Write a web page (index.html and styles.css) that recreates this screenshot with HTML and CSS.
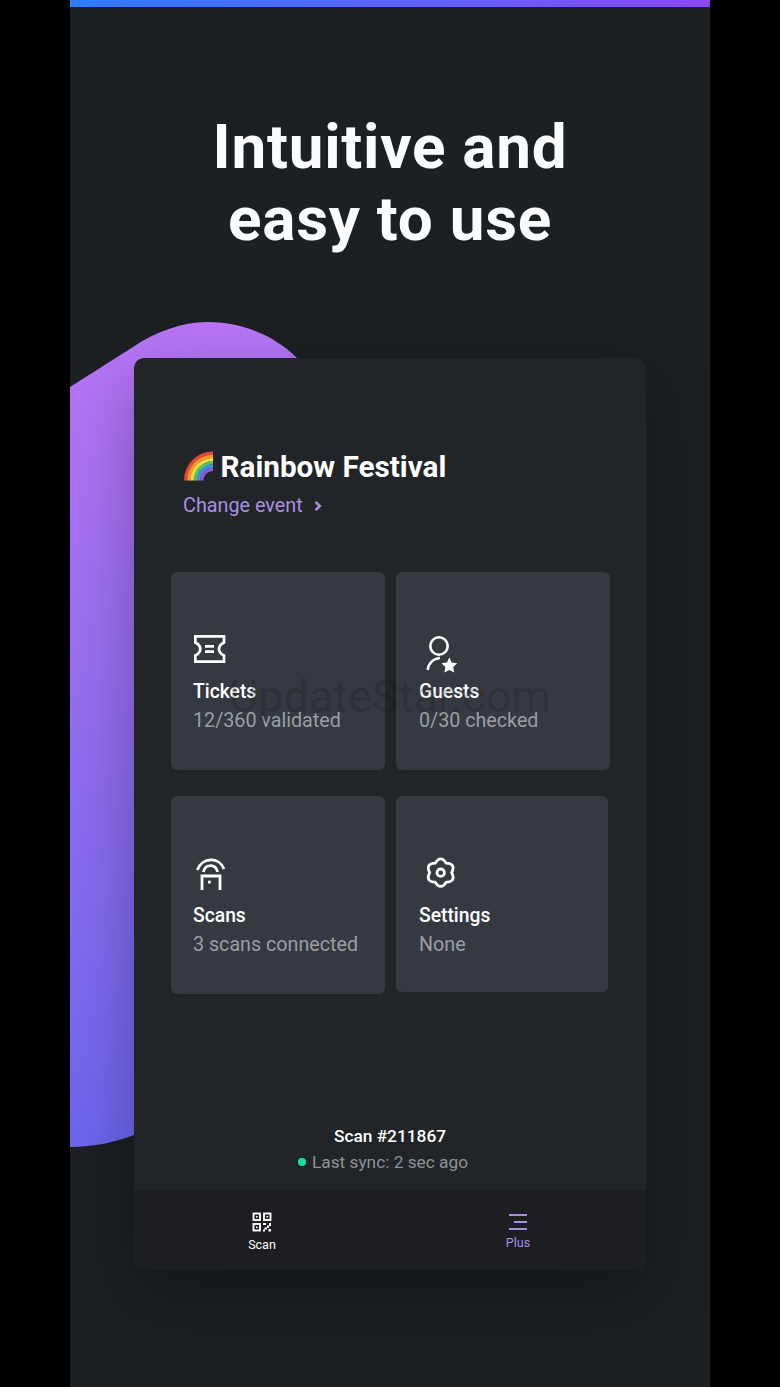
FILE: index.html
```html
<!DOCTYPE html>
<html lang="en">
<head>
<meta charset="utf-8">
<title>Rainbow Festival</title>
<link rel="stylesheet" href="styles.css">
</head>
<body>
<main class="phone">
  <div class="topbar"></div>
  <h1 class="headline">Intuitive and<br>easy to use</h1>

  <svg class="blob" width="240" height="840" viewBox="0 0 240 840" aria-hidden="true">
    <defs>
      <linearGradient id="blobfill" x1="0" y1="0" x2="0" y2="1">
        <stop offset="0" stop-color="#b876f6"/>
        <stop offset="1" stop-color="#6e66ee"/>
      </linearGradient>
    </defs>
    <path fill="url(#blobfill)" d="M0 67 L63 27 C85 12 112 2 137 2 C170 2 203 14 227 38 L232 800 L64 815 C46 822 24 827 0 827 Z"/>
  </svg>

  <section class="card">
    <header class="event">
      <h2 class="event-title">
        <svg class="rainbow" width="30" height="30" viewBox="1 0 30 30" aria-hidden="true">
          <g fill="none" stroke-width="3.4">
            <path stroke="#e8453c" d="M2.7 29.5A27.3 27.3 0 0 1 30 2.2"/>
            <path stroke="#f59a23" d="M5.9 29.5A24.1 24.1 0 0 1 30 5.4"/>
            <path stroke="#fbd84a" d="M9.1 29.5A20.9 20.9 0 0 1 30 8.6"/>
            <path stroke="#5cc05a" d="M12.3 29.5A17.7 17.7 0 0 1 30 11.8"/>
            <path stroke="#3f8fe0" d="M15.5 29.5A14.5 14.5 0 0 1 30 15"/>
            <path stroke="#8a5ad6" d="M18.7 29.5A11.3 11.3 0 0 1 30 18.2"/>
          </g>
        </svg>
        <span>Rainbow Festival</span>
      </h2>
      <a class="change-event">
        <span>Change event</span>
        <svg class="chevron" width="8" height="12" viewBox="0 0 8 12" aria-hidden="true"><path d="M1.6 1.8 5.8 6 1.6 10.2" fill="none" stroke="currentColor" stroke-width="2.6"/></svg>
      </a>
    </header>

    <div class="tiles">
      <article class="tile tile-left">
        <svg class="tile-icon" width="40" height="46" viewBox="0 0 40 46" aria-hidden="true">
          <path transform="translate(0 6)" d="M1.300 1.300H30V7.500C26 9.500 25 11.500 25 14S26 18.500 30 20.500V26.700H1.300V20.500C5.300 18.500 6.300 16.500 6.300 14S5.300 9.500 1.300 7.500ZM11 11.300h9M11 16.700h9" fill="none" stroke="#fff" stroke-width="2.700"/>
        </svg>
        <h3 class="tile-title">Tickets</h3>
        <p class="tile-sub">12/360 validated</p>
      </article>
      <article class="tile">
        <svg class="tile-icon" width="40" height="46" viewBox="0 0 40 46" aria-hidden="true">
          <circle cx="20" cy="17" r="8.700" fill="none" stroke="#fff" stroke-width="2.600"/>
          <path d="M8.700 41C9.500 34 14.500 29.600 21 29" fill="none" stroke="#fff" stroke-width="2.600"/>
          <path transform="translate(5 6)" d="M25.300 22.500 27.700 27.600 33.200 28.300 29.200 32.100 30.200 37.600 25.300 34.900 20.400 37.600 21.400 32.100 17.400 28.300 22.900 27.600Z" fill="#fff"/>
        </svg>
        <h3 class="tile-title">Guests</h3>
        <p class="tile-sub">0/30 checked</p>
      </article>
      <article class="tile tile-left">
        <svg class="tile-icon" width="40" height="46" viewBox="0 0 40 46" aria-hidden="true">
          <path d="M3.300 17C8 3.800 25.500 3.800 30 16M9.300 19C11.500 10.600 21.500 10.600 23.700 19" fill="none" stroke="#fff" stroke-width="2.800"/>
          <path d="M8 37V23H26V37" fill="none" stroke="#fff" stroke-width="2.800"/>
          <rect x="14" y="27.700" width="2.800" height="2.800" fill="#fff"/>
        </svg>
        <h3 class="tile-title">Scans</h3>
        <p class="tile-sub">3 scans connected</p>
      </article>
      <article class="tile tile-narrow">
        <svg class="tile-icon" width="40" height="46" viewBox="0 0 40 46" aria-hidden="true">
          <g transform="translate(21.700 19.700)">
            <path d="M-5.500 -9.530Q0 -18 5.500 -9.530Q15.590 -9 11 0Q15.590 9 5.500 9.530Q0 18 -5.500 9.530Q-15.590 9 -11 0Q-15.590 -9 -5.500 -9.530Z" fill="none" stroke="#fff" stroke-width="2.800" stroke-linejoin="round"/>
            <circle r="3.700" fill="none" stroke="#fff" stroke-width="2.800"/>
          </g>
        </svg>
        <h3 class="tile-title">Settings</h3>
        <p class="tile-sub">None</p>
      </article>
    </div>

    <div class="status">
      <p class="scan-id">Scan #211867</p>
      <p class="sync"><span class="sync-dot"></span>Last sync: 2 sec ago</p>
    </div>

    <nav class="tabbar">
      <a class="tab">
        <svg width="20" height="20" viewBox="0 0 20 20" aria-hidden="true">
          <g fill="none" stroke="#fff" stroke-width="1.900">
            <rect x="1.500" y="1.500" width="6.500" height="6.500"/>
            <rect x="12" y="1.500" width="6.500" height="6.500"/>
            <rect x="1.500" y="12" width="6.500" height="6.500"/>
          </g>
          <g fill="#fff">
            <rect x="4" y="4" width="1.600" height="1.600"/>
            <rect x="14.500" y="4" width="1.600" height="1.600"/>
            <rect x="4" y="14.500" width="1.600" height="1.600"/>
            <path d="M11 11h3v2h-3zM17 11h2v3h-2zM15 13.500h2v2.500h-2zM12.500 15.500h2.500v2h-2.500zM11 17.500h2v2h-2zM16.500 17h2.500v2.500h-2.500z"/>
          </g>
        </svg>
        <span>Scan</span>
      </a>
      <a class="tab tab-active">
        <svg width="20" height="18" viewBox="0 0 20 18" aria-hidden="true">
          <path d="M1 2h18M6 9h13M1 16h18" fill="none" stroke="currentColor" stroke-width="2"/>
        </svg>
        <span>Plus</span>
      </a>
    </nav>
  </section>

  <div class="watermark">UpdateStar.com</div>
</main>
</body>
</html>
```

FILE: styles.css
```css
* { box-sizing: border-box; }
html, body { margin: 0; height: 100%; background: #000; }
body { font-family: Roboto, "Liberation Sans", sans-serif; overflow: hidden; }
h1, h2, h3, p { margin: 0; }

.phone {
  position: relative;
  width: 640px;
  height: 1387px;
  margin: 0 auto;
  overflow: hidden;
  background: #1c2023;
}
.topbar {
  height: 7px;
  background: linear-gradient(90deg, #2f7dfb 0%, #5f62fb 55%, #8c49f7 100%);
}
.headline {
  margin-top: 104px;
  font-size: 62px;
  line-height: 72px;
  font-weight: 700;
  letter-spacing: 0.75px;
  text-align: center;
  color: #fbfcfd;
}
.blob { position: absolute; left: 0; top: 320px; }

.card {
  position: relative;
  display: flex;
  flex-direction: column;
  width: 512px;
  height: 912px;
  margin: 103px 0 0 64px;
  border-radius: 10px;
  overflow: hidden;
  background: #212528;
  box-shadow: 0 24px 70px rgba(0, 0, 0, .3);
}
.event { padding: 91px 0 0 50px; }
.event-title {
  display: flex;
  align-items: center;
  gap: 6.500px;
  height: 34px;
  font-size: 29.700px;
  font-weight: 700;
  color: #fff;
}
.rainbow { margin-top: -1px; }
.change-event {
  display: flex;
  align-items: center;
  gap: 11px;
  margin: 9px 0 0 -1px;
  font-size: 19.800px;
  line-height: 28px;
  color: #a98fe3;
}
.tiles {
  display: grid;
  grid-template-columns: 214px 214px;
  column-gap: 11px;
  row-gap: 26px;
  margin: 52px 0 0 37px;
}
.tile {
  display: flex;
  flex-direction: column;
  height: 198px;
  padding: 57px 0 0 23px;
  border-radius: 6px;
  background: #343a3f;
}
.tile-left { padding-left: 22px; }
.tile-left .tile-icon { margin-left: 1px; }
.tile-narrow { width: 212px; height: 196px; }
.tile-icon { display: block; flex: none; }
.tile-title {
  margin-top: 5px;
  font-size: 19.300px;
  line-height: 24px;
  font-weight: 500;
  color: #fff;
}
.tile-sub {
  margin-top: 5px;
  font-size: 19.700px;
  line-height: 24px;
  color: #9a9ea3;
}
.status {
  margin-top: auto;
  padding-bottom: 16px;
  text-align: center;
}
.scan-id {
  font-size: 17.300px;
  line-height: 24px;
  font-weight: 500;
  color: #fff;
}
.sync {
  display: flex;
  align-items: center;
  justify-content: center;
  gap: 6px;
  margin-top: 2px;
  font-size: 17.300px;
  line-height: 24px;
  color: #8e9297;
}
.sync-dot {
  width: 8px;
  height: 8px;
  margin-left: -14px;
  border-radius: 50%;
  background: #0fe3a0;
}
.tabbar {
  display: grid;
  grid-template-columns: 1fr 1fr;
  height: 80px;
  background: #1c1e22;
}
.tab {
  display: flex;
  flex-direction: column;
  align-items: center;
  padding-top: 22px;
  gap: 5px;
  font-size: 12.500px;
  line-height: 16px;
  color: #fff;
}
.tab-active { color: #a98fe3; padding-top: 23px; gap: 4px; }

.watermark {
  position: absolute;
  left: 0;
  right: 0;
  top: 672px;
  font-size: 45px;
  line-height: 50px;
  text-align: center;
  color: rgba(20, 22, 26, .24);
  pointer-events: none;
}
```
